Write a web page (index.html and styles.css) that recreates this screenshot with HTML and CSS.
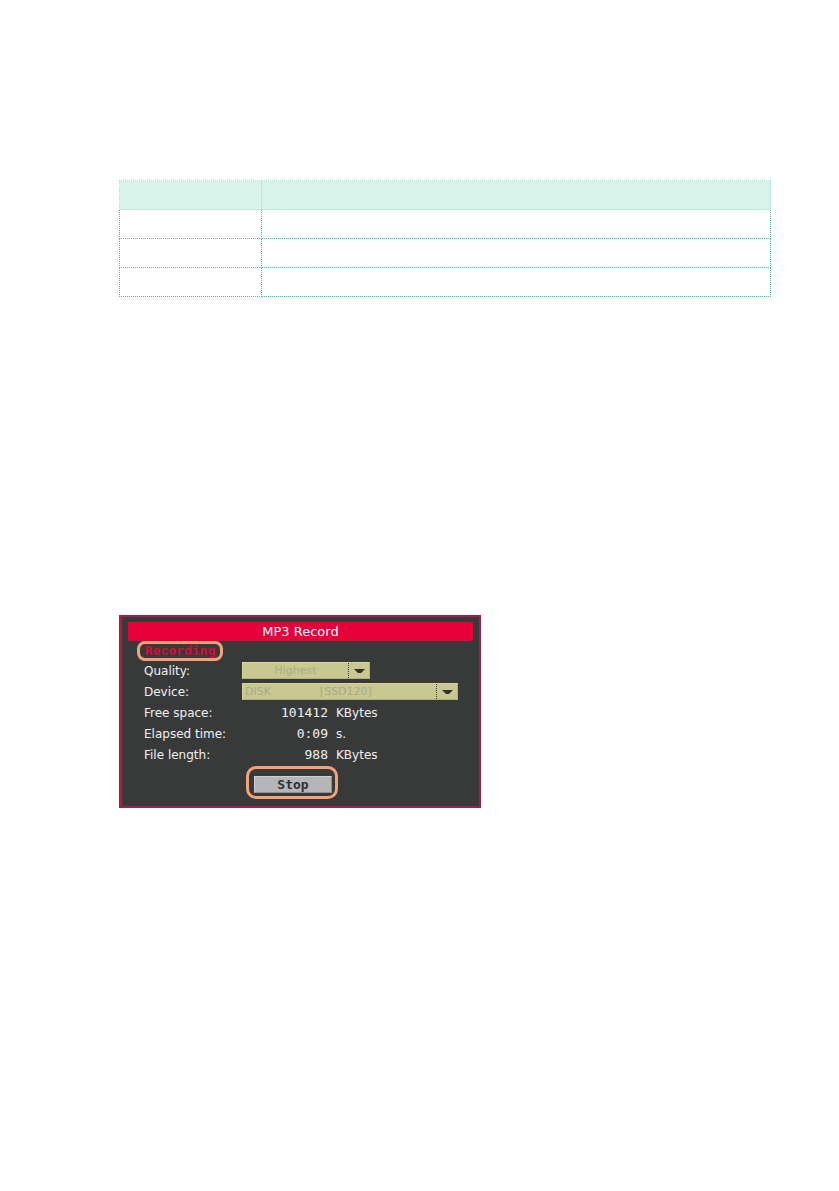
FILE: index.html
```html
<!DOCTYPE html>
<html lang="en">
<head>
    <meta charset="UTF-8">
    <meta name="viewport" content="width=device-width, initial-scale=1.0">
    <title>MP3 Record</title>
    <link rel="stylesheet" href="styles.css">
</head>
<body>
    <main>
        <table class="info-table">
            <thead>
                <tr><th></th><th></th></tr>
            </thead>
            <tbody>
                <tr><td></td><td></td></tr>
                <tr><td></td><td></td></tr>
                <tr><td></td><td></td></tr>
            </tbody>
        </table>

        <form class="recorder">
            <h1>MP3 Record</h1>
            <div class="status"><span class="highlight">Recording</span></div>

            <div class="row">
                <label for="quality">Quality:</label>
                <div class="dropdown quality">
                    <select id="quality" disabled>
                        <option>Highest</option>
                    </select>
                    <span class="arrow"><svg width="11" height="4" viewBox="0 0 11 4"><path d="M0 0h11L7 4H4z"/></svg></span>
                </div>
            </div>
            <div class="row">
                <label for="device">Device:</label>
                <div class="dropdown device">
                    <select id="device" disabled>
                        <option>DISK&nbsp;&nbsp;&nbsp;&nbsp;&nbsp;&nbsp;&nbsp;&nbsp;&nbsp;&nbsp;&nbsp;&nbsp;&nbsp;&nbsp;[SSD120]</option>
                    </select>
                    <span class="arrow"><svg width="11" height="4" viewBox="0 0 11 4"><path d="M0 0h11L7 4H4z"/></svg></span>
                </div>
            </div>
            <div class="row">
                <span>Free space:</span>
                <span class="number">101412</span>
                <span>KBytes</span>
            </div>
            <div class="row">
                <span>Elapsed time:</span>
                <span class="number">0:09</span>
                <span>s.</span>
            </div>
            <div class="row">
                <span>File length:</span>
                <span class="number">988</span>
                <span>KBytes</span>
            </div>

            <div class="actions">
                <button type="button">Stop</button>
            </div>
        </form>
    </main>
</body>
</html>
```
FILE: styles.css
```css
body {
    margin: 0;
    background-color: #ffffff;
    font-family: "DejaVu Sans", sans-serif;
}
main {
    padding: 180px 68px 60px 119px;
}

.info-table {
    width: 100%;
    table-layout: fixed;
    border-collapse: collapse;
    margin-bottom: 318px;
}
.info-table th,
.info-table td {
    height: 28px;
    padding: 0;
    border: 1px dotted #48c4a4;
}
.info-table th {
    background-color: #d8f3ea;
    background-clip: padding-box;
    border-color: #a4dfce;
}
.info-table th:first-child {
    width: 141px;
}

.recorder {
    box-sizing: border-box;
    max-width: 362px;
    padding: 5px 6px 7px;
    border: 2px solid #a81c4a;
    border-left: 3px solid #bc1640;
    background-color: #383a3a;
    color: #f0f0f0;
    font-size: 12px;
}
.recorder h1 {
    margin: 0;
    height: 19px;
    border-radius: 1px;
    background-color: #e60039;
    color: #ffffff;
    font-size: 13px;
    font-weight: normal;
    line-height: 19px;
    text-align: center;
}
.status {
    display: flex;
    align-items: flex-start;
    height: 19px;
    padding-left: 9px;
}
.highlight {
    box-sizing: border-box;
    width: 86px;
    height: 20px;
    border: 3px solid #f2a178;
    border-radius: 8px;
    color: #d8083a;
    font-family: "DejaVu Sans Mono", monospace;
    font-size: 13px;
    font-weight: bold;
    line-height: 14px;
    text-align: center;
}

.row {
    display: grid;
    grid-template-columns: 98px 86px 1fr;
    align-items: center;
    height: 21px;
    padding-left: 16px;
}
.number {
    text-align: right;
    font-family: "DejaVu Sans Mono", monospace;
    font-size: 13px;
}
.number + span {
    padding-left: 8px;
}
.dropdown {
    grid-column: 2 / 4;
    display: flex;
    box-sizing: border-box;
    height: 17px;
    border: 1px solid #d4d49c;
    border-right-color: #b0b07c;
    border-bottom-color: #b0b07c;
    background-color: #c8c890;
}
.dropdown select {
    flex: 1;
    min-width: 0;
    padding: 0 2px;
    border: none;
    appearance: none;
    background: none;
    color: #aaaa88;
    font-family: "DejaVu Sans", sans-serif;
    font-size: 11px;
    opacity: 1;
}
.quality {
    width: 128px;
}
.quality select {
    text-align: center;
    text-align-last: center;
}
.device {
    width: 216px;
}
.arrow {
    display: flex;
    align-items: center;
    justify-content: center;
    width: 20px;
    border-left: 1px dotted #383a3a;
}
.arrow svg {
    fill: #303030;
}

.actions {
    box-sizing: border-box;
    width: 92px;
    margin: 1px 0 0 118px;
    padding: 7px 3px 3px 5px;
    border: 3px solid #f2a178;
    border-radius: 10px;
}
.actions button {
    display: block;
    width: 100%;
    height: 17px;
    padding: 0;
    border: 1px solid #d0d0d0;
    border-right-color: #929294;
    border-bottom-color: #929294;
    background-color: #b6b6b8;
    color: #303030;
    font-family: "DejaVu Sans Mono", monospace;
    font-size: 13px;
    font-weight: bold;
    line-height: 15px;
}
```
